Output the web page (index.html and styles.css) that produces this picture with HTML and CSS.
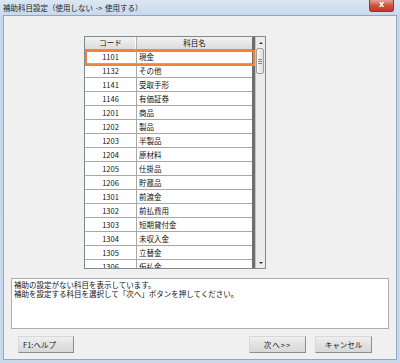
FILE: index.html
```html
<!DOCTYPE html>
<html lang="ja">
<head>
<meta charset="utf-8">
<title>補助科目設定</title>
<link rel="stylesheet" href="styles.css">
</head>
<body>
<div class="window">
  <div class="titlebar">
    <span class="title">補助科目設定（使用しない -&gt; 使用する）</span>
    <div class="close">x</div>
  </div>
  <div class="client">
    <div class="grid">
      <div class="list">
        <div class="row head"><div class="c-code">コード</div><div class="c-name">科目名</div></div>
        <div class="row"><div class="c-code">1101</div><div class="c-name">現金</div></div>
        <div class="row"><div class="c-code">1132</div><div class="c-name">その他</div></div>
        <div class="row"><div class="c-code">1141</div><div class="c-name">受取手形</div></div>
        <div class="row"><div class="c-code">1146</div><div class="c-name">有価証券</div></div>
        <div class="row"><div class="c-code">1201</div><div class="c-name">商品</div></div>
        <div class="row"><div class="c-code">1202</div><div class="c-name">製品</div></div>
        <div class="row"><div class="c-code">1203</div><div class="c-name">半製品</div></div>
        <div class="row"><div class="c-code">1204</div><div class="c-name">原材料</div></div>
        <div class="row"><div class="c-code">1205</div><div class="c-name">仕掛品</div></div>
        <div class="row"><div class="c-code">1206</div><div class="c-name">貯蔵品</div></div>
        <div class="row"><div class="c-code">1301</div><div class="c-name">前渡金</div></div>
        <div class="row"><div class="c-code">1302</div><div class="c-name">前払費用</div></div>
        <div class="row"><div class="c-code">1303</div><div class="c-name">短期貸付金</div></div>
        <div class="row"><div class="c-code">1304</div><div class="c-name">未収入金</div></div>
        <div class="row"><div class="c-code">1305</div><div class="c-name">立替金</div></div>
        <div class="row"><div class="c-code">1306</div><div class="c-name">仮払金</div></div>
        <div class="selection"></div>
      </div>
      <div class="scrollbar">
        <div class="sb-btn"><span class="arrow-up"></span></div>
        <div class="sb-track"><div class="thumb"><span class="grip"></span></div></div>
        <div class="sb-btn"><span class="arrow-down"></span></div>
      </div>
    </div>
    <div class="message">補助の設定がない科目を表示しています。<br>補助を設定する科目を選択して「次へ」ボタンを押してください。</div>
    <div class="buttons">
      <div class="btn help">F1:ヘルプ</div>
      <div class="btn next">次へ&gt;&gt;</div>
      <div class="btn">キャンセル</div>
    </div>
  </div>
</div>
</body>
</html>
```
FILE: styles.css
```css
html, body {
  margin: 0;
  padding: 0;
}
body {
  width: 400px;
  height: 363px;
  overflow: hidden;
  font-family: "Noto Sans CJK JP", "Noto Sans", sans-serif;
  font-size: 7.5px;
  color: #111;
}
.window {
  width: 400px;
  height: 363px;
  box-sizing: border-box;
  background: linear-gradient(#dbe6f3, #c8d8ec 16px, #c9d9ec);
  display: flex;
  flex-direction: column;
}
.titlebar {
  height: 15px;
  display: flex;
  justify-content: space-between;
  align-items: flex-start;
  padding: 0 6px 0 3px;
}
.title {
  line-height: 15px;
  color: #1e1e1e;
  word-spacing: 1px;
}
.close {
  width: 25px;
  height: 12px;
  box-sizing: border-box;
  border: 1px solid #8c3a30;
  border-top: none;
  border-radius: 0 0 3px 3px;
  background: linear-gradient(#e8a195, #d0523f 50%, #c0392b);
  color: #fff;
  font-family: "DejaVu Sans", sans-serif;
  font-weight: bold;
  font-size: 8px;
  line-height: 10px;
  text-align: center;
}
.client {
  flex: 1;
  margin: 0 3px 3px;
  border: 1px solid #92a6bf;
  background: #f0f0f0;
  display: flex;
  flex-direction: column;
}
.grid {
  margin: 20px 0 0 80px;
  width: 182px;
  height: 233px;
  box-sizing: border-box;
  border: 1px solid #828790;
  display: flex;
  background: #fff;
}
.list {
  position: relative;
  width: 170px;
  overflow: hidden;
  background: #fff;
}
.list::after {
  content: "";
  position: absolute;
  right: 0;
  top: 0;
  bottom: 0;
  width: 3px;
  background: #6e6e6e;
}
.row {
  display: flex;
  height: 14px;
  width: 167px;
  flex-shrink: 0;
  box-sizing: border-box;
  border-bottom: 1px solid #a8a8a8;
  line-height: 13px;
}
.c-code {
  width: 52px;
  box-sizing: border-box;
  border-right: 1px solid #a8a8a8;
  text-align: center;
}
.c-name {
  flex: 1;
  padding-left: 2px;
}
.head {
  height: 13px;
  line-height: 12px;
  background: linear-gradient(#f2f2f2, #dcdcdc);
  border-bottom-color: #a0a0a0;
}
.head .c-code {
  border-right: 1px solid #b4b4b4;
  box-shadow: inset -1px 0 0 #fff;
}
.head .c-name {
  text-align: center;
  padding-left: 0;
}
.selection {
  position: absolute;
  left: 0;
  top: 13px;
  width: 170px;
  height: 16px;
  box-sizing: border-box;
  border: 2px solid #f0823a;
  z-index: 2;
}
.scrollbar {
  width: 10px;
  box-sizing: border-box;
  border-left: 1px solid #c4c4c4;
  background: #ececec;
  display: flex;
  flex-direction: column;
}
.sb-btn {
  height: 11px;
  display: flex;
  align-items: center;
  justify-content: center;
}
.arrow-up {
  width: 0;
  height: 0;
  border-left: 2px solid transparent;
  border-right: 2px solid transparent;
  border-bottom: 2px solid #333;
}
.arrow-down {
  width: 0;
  height: 0;
  border-left: 2px solid transparent;
  border-right: 2px solid transparent;
  border-top: 2px solid #333;
}
.sb-track {
  flex: 1;
}
.thumb {
  height: 26px;
  width: 8px;
  box-sizing: border-box;
  border: 1px solid #a0a0a0;
  border-radius: 2px;
  background: linear-gradient(to right, #f6f6f6, #dedede);
  display: flex;
  align-items: center;
  justify-content: center;
}
.grip {
  width: 4px;
  height: 3px;
  border-top: 1px solid #8a8a8a;
  border-bottom: 1px solid #8a8a8a;
  background: linear-gradient(transparent 1px, #8a8a8a 1px, #8a8a8a 2px, transparent 2px);
}
.message {
  margin: 9px 0 0 7px;
  width: 378px;
  height: 51px;
  box-sizing: border-box;
  border: 1px solid #abadb3;
  background: #fff;
  padding: 1px 2px;
  line-height: 9px;
}
.buttons {
  display: flex;
  margin-top: 7px;
  padding: 0 24px 0 14px;
  gap: 9px;
}
.btn {
  width: 57px;
  height: 17px;
  box-sizing: border-box;
  border: 1px solid;
  border-color: #d8d8d8 #8e8e8e #8e8e8e #d8d8d8;
  background: linear-gradient(#efefef, #e2e2e2 50%, #d8d8d8);
  line-height: 15px;
  text-align: center;
  color: #1a1a1a;
}
.next {
  letter-spacing: 1px;
}
.help {
  width: 56px;
  margin-right: auto;
  text-align: left;
  padding-left: 4px;
}
```
